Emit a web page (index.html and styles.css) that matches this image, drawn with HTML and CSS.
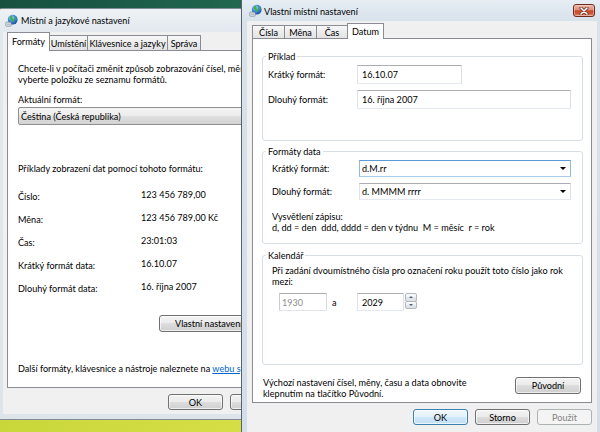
FILE: index.html
```html
<!DOCTYPE html>
<html lang="cs">
<head>
<meta charset="utf-8">
<title>Vlastní místní nastavení</title>
<link rel="stylesheet" href="styles.css">
</head>
<body>
<div class="desktop">
  <section class="win win-back">
    <header class="titlebar">
      <svg class="ico" viewBox="0 0 16 16" width="13" height="13" aria-hidden="true">
        <defs><radialGradient id="gl1" cx="38%" cy="30%" r="75%"><stop offset="0" stop-color="#c6e8ff"/><stop offset="0.45" stop-color="#3b8fe0"/><stop offset="1" stop-color="#1a4c9a"/></radialGradient></defs>
        <circle cx="9.5" cy="7" r="6" fill="url(#gl1)"/>
        <path d="M6.5 2.8 C8.5 2 9.6 3 9.2 4.2 C8.6 5.4 10.2 6 10.8 7.2 C11.3 8.6 9.8 10.4 8.8 9.6 C8 8.8 8.4 7.6 7.2 7.2 C6 6.6 5.4 4.2 6.5 2.8 Z" fill="#46b03c"/>
        <path d="M12 3.6 C13.6 4.2 14.6 5.8 14.4 7 C13.2 7.2 12.2 6.2 12 3.6 Z" fill="#46b03c"/>
        <rect x="1" y="10" width="6.5" height="5" rx="0.8" fill="#e9edf1" stroke="#6c7886" stroke-width="0.8"/>
        <path d="M2.4 12.5 H6.2" stroke="#6c7886" stroke-width="0.8"/>
      </svg>
      <span class="title">Místní a jazykové nastavení</span>
    </header>
    <div class="client">
      <nav class="tabs tabs-back">
        <span class="tab sel lt1">Formáty</span>
        <span class="tab lt2">Umístění</span>
        <span class="tab lt3">Klávesnice a jazyky</span>
        <span class="tab lt4">Správa</span>
      </nav>
      <div class="panel panel-back">
        <p class="intro">Chcete-li v počítači změnit způsob zobrazování čísel, měny,<br>vyberte položku ze seznamu formátů.</p>
        <div class="cur-label">Aktuální formát:</div>
        <div class="dropdown">Čeština (Česká republika)</div>
        <div class="ex-label">Příklady zobrazení dat pomocí tohoto formátu:</div>
        <div class="samples">
          <span class="s-l">Číslo:</span><span class="s-v">123 456 789,00</span>
          <span class="s-l">Měna:</span><span class="s-v">123 456 789,00 Kč</span>
          <span class="s-l">Čas:</span><span class="s-v">23:01:03</span>
          <span class="s-l">Krátký formát data:</span><span class="s-v">16.10.07</span>
          <span class="s-l">Dlouhý formát data:</span><span class="s-v">16. října 2007</span>
        </div>
        <div class="custom"><button class="btn btn-custom" type="button">Vlastní nastavení...</button></div>
        <p class="more">Další formáty, klávesnice a nástroje naleznete na <a href="#">webu společnosti</a></p>
      </div>
      <div class="footer">
        <button class="btn" type="button">OK</button>
        <button class="btn" type="button">Storno</button>
      </div>
    </div>
  </section>

  <section class="win win-front">
    <header class="titlebar">
      <svg class="ico" viewBox="0 0 16 16" width="13" height="13" aria-hidden="true">
        <defs><radialGradient id="gl2" cx="38%" cy="30%" r="75%"><stop offset="0" stop-color="#c6e8ff"/><stop offset="0.45" stop-color="#3b8fe0"/><stop offset="1" stop-color="#1a4c9a"/></radialGradient></defs>
        <circle cx="9.5" cy="7" r="6" fill="url(#gl2)"/>
        <path d="M6.5 2.8 C8.5 2 9.6 3 9.2 4.2 C8.6 5.4 10.2 6 10.8 7.2 C11.3 8.6 9.8 10.4 8.8 9.6 C8 8.8 8.4 7.6 7.2 7.2 C6 6.6 5.4 4.2 6.5 2.8 Z" fill="#46b03c"/>
        <path d="M12 3.6 C13.6 4.2 14.6 5.8 14.4 7 C13.2 7.2 12.2 6.2 12 3.6 Z" fill="#46b03c"/>
        <rect x="1" y="10" width="6.5" height="5" rx="0.8" fill="#e9edf1" stroke="#6c7886" stroke-width="0.8"/>
        <path d="M2.4 12.5 H6.2" stroke="#6c7886" stroke-width="0.8"/>
      </svg>
      <span class="title">Vlastní místní nastavení</span>
      <span class="close" aria-label="Zavřít">
        <svg viewBox="0 0 10 8" width="10" height="8" aria-hidden="true">
          <path d="M2 1 L8 7 M8 1 L2 7" stroke="#5a2418" stroke-width="3" stroke-linecap="round"/>
          <path d="M2 1 L8 7 M8 1 L2 7" stroke="#ffffff" stroke-width="1.6" stroke-linecap="round"/>
        </svg>
      </span>
    </header>
    <div class="client">
      <nav class="tabs tabs-front">
        <span class="tab rt1">Čísla</span>
        <span class="tab rt2">Měna</span>
        <span class="tab rt3">Čas</span>
        <span class="tab sel rt4">Datum</span>
      </nav>
      <div class="panel panel-front">
        <div class="group g1">
          <span class="legend">Příklad</span>
          <div class="frow r1"><span class="flabel">Krátký formát:</span><span class="tb w-short">16.10.07</span></div>
          <div class="frow r2"><span class="flabel">Dlouhý formát:</span><span class="tb w-long">16. října 2007</span></div>
        </div>
        <div class="group g2">
          <span class="legend">Formáty data</span>
          <div class="frow r1"><span class="flabel">Krátký formát:</span><span class="combo focus">d.M.rr<i class="arrow"></i></span></div>
          <div class="frow r2"><span class="flabel">Dlouhý formát:</span><span class="combo">d. MMMM rrrr<i class="arrow"></i></span></div>
          <p class="note n2">Vysvětlení zápisu:<br>d, dd = den&nbsp; ddd, dddd = den v týdnu&nbsp; M = měsíc&nbsp; r = rok</p>
        </div>
        <div class="group g3">
          <span class="legend">Kalendář</span>
          <p class="note n3">Při zadání dvoumístného čísla pro označení roku použít toto číslo jako rok<br>mezi:</p>
          <div class="years">
            <span class="tb yr dis">1930</span>
            <span class="and">a</span>
            <span class="tb yr yr2">2029</span>
            <span class="spin"><i class="sp up"><b></b></i><i class="sp down"><b></b></i></span>
          </div>
        </div>
        <div class="reset">
          <p>Výchozí nastavení čísel, měny, času a data obnovite<br>klepnutím na tlačítko Původní.</p>
          <button class="btn btn-reset" type="button">Původní</button>
        </div>
      </div>
      <div class="footer">
        <button class="btn default" type="button">OK</button>
        <button class="btn" type="button">Storno</button>
        <button class="btn dis" type="button">Použít</button>
      </div>
    </div>
  </section>
</div>
</body>
</html>
```

FILE: styles.css
```css
* { box-sizing: border-box; }
html, body { margin: 0; padding: 0; }
body {
  width: 600px;
  height: 432px;
  overflow: hidden;
  font-family: Lato, "Noto Sans", "Liberation Sans", sans-serif;
  font-size: 9.1px;
  line-height: 11px;
  color: #000;
}
p { margin: 0; }

.desktop {
  position: relative;
  width: 600px;
  height: 432px;
  overflow: hidden;
  background:
    linear-gradient(to right, #17503f 0%, #1f634d 35%, #2e8460 80%, #1b5b47 100%) top / 100% 10px no-repeat,
    linear-gradient(to right, #c9d73b 0%, #d7df47 45%, #bcd23f 100%) bottom / 100% 14px no-repeat,
    #7fa850;
}

/* windows on the desktop */
.win {
  position: absolute;
  display: flex;
  flex-direction: column;
  border: 1px solid #5d6b78;
}
.win-back {
  left: -4px;
  top: 8px;
  width: 250px;
  height: 412px;
  z-index: 1;
  overflow: hidden;
  border-color: #7f8c98;
  border-radius: 6px 6px 0 0;
  background: linear-gradient(#eef2f5, #e1e8ee 24px, #dde4ea);
}
.win-front {
  left: 241px;
  top: -1px;
  width: 361px;
  height: 450px;
  z-index: 2;
  border-color: #56636f;
  background: linear-gradient(#e6edf3, #d8e2eb 21px, #d4dee8);
}

.titlebar {
  display: flex;
  align-items: center;
  flex: none;
}
.win-back .titlebar { height: 23px; padding-left: 8px; }
.win-front .titlebar { height: 21px; padding-left: 7px; }
.ico { flex: none; display: block; }
.title { margin-left: 3px; white-space: nowrap; }
.win-front .title { margin-left: 2px; padding-top: 2px; }

.close {
  align-self: flex-start;
  margin: 4px 6px 0 auto;
  width: 22px;
  height: 13px;
  border: 1px solid #6e2b1d;
  border-radius: 3px;
  background: linear-gradient(#ebb4a6 0%, #dc8c76 45%, #c6472a 52%, #d15a3c 80%, #e29279 100%);
  box-shadow: inset 0 0 0 1px rgba(255, 255, 255, 0.35);
  display: flex;
  align-items: center;
  justify-content: center;
}
.close svg { display: block; }

/* client area */
.client {
  flex: 1;
  display: flex;
  flex-direction: column;
  background: #f0f0f0;
}
.win-back .client { margin: 0 0 5px 6px; padding-left: 4px; width: 400px; }
.win-front .client { margin: 0 4px 0 5px; padding: 2px 5px 0 5px; }

/* tabs */
.tabs {
  display: flex;
  align-items: flex-end;
  margin-bottom: -1px;
  position: relative;
  z-index: 1;
  flex: none;
}
.tab {
  display: flex;
  align-items: center;
  justify-content: center;
  border: 1px solid #898c95;
  border-bottom: none;
  background: linear-gradient(#f8f8f8, #ececec 50%, #e3e3e3);
  margin-left: -1px;
  margin-bottom: 1px;
  white-space: nowrap;
}
.tab:first-child { margin-left: 0; }
.tab.sel { background: #fff; margin-bottom: 0; }
.tabs-back { height: 19px; }
.tabs-back .tab { height: 15px; }
.tabs-back .tab.sel { height: 19px; padding-bottom: 2px; }
.tabs-front { height: 16px; }
.tabs-front .tab { height: 13px; }
.tabs-front .tab.sel { height: 16px; padding-bottom: 1px; }
.lt1 { width: 43px; }
.lt2 { width: 39px; }
.lt3 { width: 81px; }
.lt4 { width: 34px; }
.rt1 { width: 33px; }
.rt2 { width: 33px; }
.rt3 { width: 32px; }
.rt4 { width: 37px; }

.panel {
  background: #fff;
  border: 1px solid #898c95;
  flex: none;
}

/* back window panel */
.panel-back {
  height: 338px;
  padding: 12px 0 0 10px;
  white-space: nowrap;
  overflow: hidden;
}
.cur-label { margin-top: 9px; }
.dropdown {
  margin-top: 2px;
  height: 18px;
  width: 300px;
  border: 1px solid #8e8f8f;
  border-radius: 2px;
  background: linear-gradient(#f4f4f4, #ececec 50%, #dfdfdf 50%, #d3d3d3);
  padding-left: 2px;
  display: flex;
  align-items: center;
}
.ex-label { margin-top: 38px; }
.samples {
  display: grid;
  grid-template-columns: 123px auto;
  grid-auto-rows: 23px;
  margin-top: 12px;
}
.s-l { padding-top: 5px; }
.s-v { padding-top: 3px; }
.custom { margin-top: 14px; padding-left: 141px; }
.more { margin-top: 31px; }
.more a { color: #0066cc; text-decoration: underline; }

/* buttons */
.btn {
  font: inherit;
  color: #000;
  width: 55px;
  height: 16px;
  padding: 0;
  border: 1px solid #707070;
  border-radius: 3px;
  background: linear-gradient(#f3f3f3 0%, #ebebeb 49%, #dddddd 50%, #cfcfcf 100%);
  box-shadow: inset 0 0 0 1px rgba(255, 255, 255, 0.65);
  display: flex;
  align-items: center;
  justify-content: center;
  white-space: nowrap;
  flex: none;
}
.btn.default {
  border-color: #3c7fb1;
  background: linear-gradient(#f1f8fd 0%, #e2f1fb 49%, #cfe7f7 50%, #c3e0f4 100%);
}
.btn.dis {
  border-color: #adb2b5;
  background: #f4f4f4;
  color: #838383;
  box-shadow: none;
}
.btn-custom { width: 110px; height: 17px; justify-content: flex-start; padding-left: 15px; }
.btn-reset { width: 66px; height: 17px; }

.footer {
  display: flex;
  gap: 7px;
  margin-top: 6px;
  padding-left: 161px;
  flex: none;
}

/* front window panel */
.panel-front {
  height: 365px;
  display: flex;
  flex-direction: column;
}
.group {
  border: 1px solid #d5dfe5;
  border-radius: 3px;
  margin: 0 8px 0 9px;
  flex: none;
}
.g1 { margin-top: 17px; height: 85px; padding-left: 5px; }
.g2 { margin-top: 10px; height: 93px; padding-left: 9px; }
.g3 { margin-top: 11px; height: 110px; padding-left: 9px; }
.legend {
  display: block;
  width: max-content;
  margin: -6px 0 0 -6px;
  padding: 0 2px;
  background: #fff;
}
.g1 .legend { margin-left: -2px; }

.frow { display: flex; align-items: center; }
.frow.r1 { margin-top: 3px; }
.frow.r2 { margin-top: 6px; }
.g1 .flabel { width: 89px; }
.g2 .flabel { width: 87px; }

.tb {
  display: flex;
  align-items: center;
  height: 19px;
  background: #fff;
  border: 1px solid;
  border-color: #abadb3 #dbdfe6 #e3e9ef #e2e3ea;
  border-radius: 1px;
  padding-left: 4px;
}
.w-short { width: 105px; }
.w-long { width: 214px; }

.combo {
  display: flex;
  align-items: center;
  width: 212px;
  height: 17px;
  background: #fff;
  border: 1px solid;
  border-color: #abadb3 #dbdfe6 #e3e9ef #e2e3ea;
  padding-left: 2px;
}
.combo.focus { border-color: #5c9bd8 #8dbbe8 #a8cdef #8dbbe8; }
.arrow {
  margin-left: auto;
  margin-right: 4px;
  width: 0;
  height: 0;
  border-left: 3px solid transparent;
  border-right: 3px solid transparent;
  border-top: 3px solid #000;
}

.note.n2 { margin-top: 11px; }
.note.n3 { margin-top: 4px; }

.years {
  display: flex;
  align-items: flex-start;
  margin-top: 6px;
  margin-left: 7px;
}
.yr { width: 48px; height: 18px; }
.yr.dis {
  padding-left: 2px;
  color: #8d8d8d;
  border-color: #a8abb0 #d6d9de #e0e4e8 #c8ccd1;
}
.yr2 { width: 47px; }
.and { width: 30px; padding-left: 5px; align-self: center; }
.spin {
  margin-left: 1px;
  width: 12px;
  height: 16px;
  display: flex;
  flex-direction: column;
}
.sp {
  flex: 1;
  border: 1px solid #b3b8be;
  border-radius: 2px;
  background: linear-gradient(#fbfbfb, #eef0f2 50%, #e3e6e9 50%, #dde1e5);
  display: flex;
  align-items: center;
  justify-content: center;
}
.sp.down { margin-top: -1px; }
.sp b {
  width: 0;
  height: 0;
  border-left: 2px solid transparent;
  border-right: 2px solid transparent;
}
.up b { border-bottom: 2px solid #4d6185; }
.down b { border-top: 2px solid #4d6185; }

.reset {
  display: flex;
  justify-content: space-between;
  align-items: flex-start;
  margin-top: 12px;
  padding: 0 10px;
  white-space: nowrap;
}
```
